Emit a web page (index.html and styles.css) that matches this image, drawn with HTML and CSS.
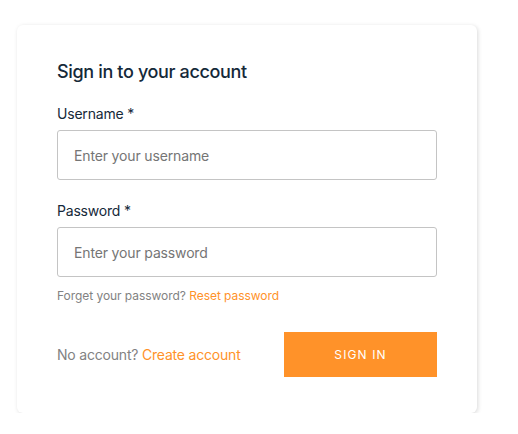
FILE: index.html
```html
<!DOCTYPE html>
<html>
<head>
<meta charset="utf-8">
<link rel="stylesheet" href="styles.css">
</head>
<body>
<div class="card">
  <h3 class="title">Sign in to your account</h3>
  <div class="field">
    <label class="label">Username *</label>
    <input class="input" type="text" placeholder="Enter your username">
  </div>
  <div class="field">
    <label class="label">Password *</label>
    <input class="input" type="password" placeholder="Enter your password">
    <div class="hint">Forget your password? <a class="link">Reset password</a></div>
  </div>
  <div class="footer">
    <span class="footer-text">No account? <a class="link">Create account</a></span>
    <button class="button">Sign in</button>
  </div>
</div>
</body>
</html>
```
FILE: styles.css
```css
* { box-sizing: border-box; }
html, body { margin: 0; background: #fff; }
body {
  padding: 25px 0 0 17px;
  font-family: Inter, "Noto Sans", sans-serif;
  color: #152939;
}
.card {
  width: 460px;
  padding: 36px 40px 36px;
  background: #fff;
  border-radius: 6px;
  box-shadow: 1px 1px 4px 0 rgba(0, 0, 0, 0.15);
}
.title {
  margin: 0 0 22px;
  font-size: 18px;
  font-weight: 500;
  line-height: 22px;
  letter-spacing: -0.35px;
  color: #152939;
}
.field { margin-bottom: 22px; }
.label {
  display: block;
  font-size: 14px;
  line-height: 17px;
  letter-spacing: -0.2px;
  margin-bottom: 8px;
  color: #152939;
}
.input {
  display: block;
  width: 100%;
  height: 50px;
  padding: 0 16px;
  font-family: inherit;
  font-size: 14px;
  letter-spacing: -0.15px;
  color: #152939;
  border: 1px solid #c4c4c4;
  border-radius: 3px;
  background: #fff;
  outline: none;
}
.input::placeholder { color: #757575; }
.hint {
  margin-top: 11px;
  font-size: 12px;
  line-height: 15px;
  letter-spacing: -0.05px;
  color: #828282;
}
.link { color: #ff9229; text-decoration: none; cursor: pointer; }
.footer {
  display: flex;
  justify-content: space-between;
  align-items: center;
  margin-top: 29px;
}
.footer-text {
  font-size: 14px;
  letter-spacing: -0.2px;
  color: #828282;
}
.button {
  width: 153px;
  height: 45px;
  border: none;
  background: #ff9229;
  color: #fff;
  font-family: inherit;
  font-size: 12px;
  letter-spacing: 1.1px;
  text-transform: uppercase;
  cursor: pointer;
}
```
